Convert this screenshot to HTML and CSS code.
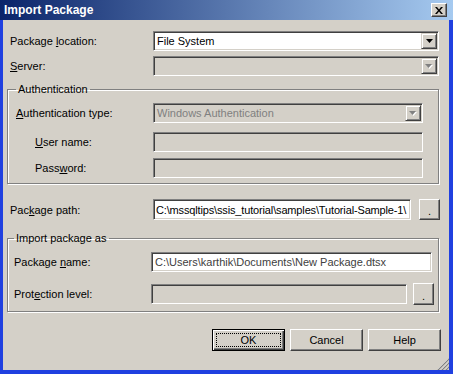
FILE: index.html
```html
<!DOCTYPE html>
<html lang="en">
<head>
    <meta charset="UTF-8">
    <title>Import Package</title>
    <link rel="stylesheet" href="styles.css">
</head>
<body>
    <div class="window">
        <div class="titlebar">
            <span class="title">Import Package</span>
            <button class="close" type="button">
                <svg width="8" height="7" viewBox="0 0 8 7"><path d="M0 0h2l2 2.5L6 0h2L5 3.5 8 7H6L4 4.5 2 7H0l3-3.5z" fill="#000"/></svg>
            </button>
        </div>

        <div class="frame">
            <!-- location / server -->
            <div class="row top">
                <label class="lbl lbl-top">Package <u>l</u>ocation:</label>
                <div class="field combo w-top">
                    <span class="text">File System</span>
                    <span class="drop"><svg width="7" height="4" viewBox="0 0 7 4"><path d="M0 0h7L3.5 4z" fill="#000"/></svg></span>
                </div>
            </div>
            <div class="row top gap5">
                <label class="lbl lbl-top"><u>S</u>erver:</label>
                <div class="field combo off w-top">
                    <span class="text"></span>
                    <span class="drop"><svg width="8" height="5" viewBox="0 0 8 5"><path d="M1 1h7L4.5 5z" fill="#fff"/><path d="M0 0h7L3.5 4z" fill="#808080"/></svg></span>
                </div>
            </div>

            <fieldset class="group auth">
                <legend>Authentication</legend>
                <div class="row first">
                    <label class="lbl lbl-grp"><u>A</u>uthentication type:</label>
                    <div class="field combo off w-auth">
                        <span class="text">Windows Authentication</span>
                        <span class="drop"><svg width="8" height="5" viewBox="0 0 8 5"><path d="M1 1h7L4.5 5z" fill="#fff"/><path d="M0 0h7L3.5 4z" fill="#808080"/></svg></span>
                    </div>
                </div>
                <div class="row gap9">
                    <label class="lbl lbl-sub"><u>U</u>ser name:</label>
                    <div class="field off w-auth"></div>
                </div>
                <div class="row gap6">
                    <label class="lbl lbl-sub">Pass<u>w</u>ord:</label>
                    <div class="field off w-auth"></div>
                </div>
            </fieldset>

            <div class="row top path">
                <label class="lbl lbl-top">Pac<u>k</u>age path:</label>
                <div class="field w-path path-text">C:\mssqltips\ssis_tutorial\samples\Tutorial-Sample-1\</div>
                <button class="btn dots" type="button">.</button>
            </div>

            <fieldset class="group import">
                <legend>Import package as</legend>
                <div class="row first">
                    <label class="lbl lbl-grp">Package <u>n</u>ame:</label>
                    <div class="field w-name pkg-name">C:\Users\karthik\Documents\New Package.dtsx</div>
                </div>
                <div class="row tall gap11">
                    <label class="lbl lbl-grp">Prot<u>e</u>ction level:</label>
                    <div class="field off w-prot"></div>
                    <button class="btn dots tall-btn" type="button">.</button>
                </div>
            </fieldset>

            <div class="actions">
                <button class="btn action default" type="button"><span>OK</span></button>
                <button class="btn action" type="button">Cancel</button>
                <button class="btn action" type="button">Help</button>
            </div>

            <svg class="grip" width="12" height="12" viewBox="0 0 12 12">
                <path d="M11 1L1 11M11 5L5 11M11 9L9 11" stroke="#fff" stroke-width="1"/>
                <path d="M12 1L1 12M12 5L5 12M12 9L9 12" stroke="#808080" stroke-width="1.2"/>
            </svg>
        </div>
    </div>
</body>
</html>
```

FILE: styles.css
```css
body {
    margin: 0;
    font-family: "Liberation Sans", Arial, sans-serif;
    font-size: 11px;
    color: #000;
    background: #d4d0c8;
}

.window {
    width: 453px;
    height: 374px;
    display: flex;
    flex-direction: column;
}

.titlebar {
    height: 20px;
    flex: none;
    display: flex;
    align-items: center;
    justify-content: space-between;
    padding: 0 6px 0 4px;
    background: linear-gradient(to right, #0a246a, #a6caf0);
    color: #fff;
    font-weight: bold;
    font-size: 12px;
}

.close {
    width: 16px;
    height: 14px;
    padding: 0;
    box-sizing: border-box;
    background: #d4d0c8;
    border: 1px solid;
    border-color: #fff #404040 #404040 #fff;
    box-shadow: inset -1px -1px #808080;
    display: flex;
    align-items: center;
    justify-content: center;
}

.frame {
    flex: 1;
    position: relative;
    background: #d4d0c8;
    border: solid #2040e0;
    border-width: 0 4px 4px 3px;
    padding: 11px 0 0 4px;
}

/* rows */
.row {
    display: flex;
    align-items: center;
    height: 20px;
}

.row.top {
    padding-left: 3px;
}

.gap5 { margin-top: 5px; }
.gap6 { margin-top: 6px; }
.gap9 { margin-top: 9px; }
.gap11 { margin-top: 11px; }

.row.first {
    margin-top: 7px;
}

.row.path {
    margin-top: 15px;
    height: 21px;
}

.row.tall {
    height: 22px;
}

.lbl {
    flex: none;
    white-space: nowrap;
}

.lbl-top { width: 143px; }
.lbl-grp { width: 137px; }
.lbl-sub { width: 118px; margin-left: 19px; }

/* sunken fields */
.field {
    flex: none;
    box-sizing: border-box;
    height: 20px;
    border: 1px solid;
    border-color: #808080 #fff #fff #808080;
    box-shadow: inset 1px 1px #404040, inset -1px -1px #d4d0c8;
    background: #fff;
    display: flex;
    align-items: center;
    padding: 0 2px 0 3px;
    overflow: hidden;
    white-space: nowrap;
}

.field.off {
    background: #d4d0c8;
    color: #808080;
}

.combo {
    padding-right: 1px;
}

.combo .text {
    flex: 1;
}

.drop {
    width: 16px;
    height: 16px;
    box-sizing: border-box;
    background: #d4d0c8;
    border: 1px solid;
    border-color: #d4d0c8 #404040 #404040 #d4d0c8;
    box-shadow: inset 1px 1px #fff, inset -1px -1px #808080;
    display: flex;
    align-items: center;
    justify-content: center;
}

.w-top { width: 286px; }
.w-auth { width: 270px; }
.w-path { width: 258px; height: 21px; }
.w-name { width: 281px; }
.w-prot { width: 256px; }

.path-text {
    padding-left: 2px;
    letter-spacing: -0.15px;
}

.pkg-name {
    color: #404040;
}

/* group boxes */
.group {
    margin: 7px 10px 0 0;
    padding: 0 0 5px 8px;
    min-width: 0;
    border: 1px solid #808080;
    box-shadow: inset 1px 1px #fff, 1px 1px #fff;
}

.group legend {
    padding: 0 2px;
    line-height: 13px;
}

.group.import {
    margin-top: 12px;
    padding: 0 0 6px 6px;
}

/* raised buttons */
.btn {
    box-sizing: border-box;
    padding: 0;
    background: #d4d0c8;
    border: 1px solid;
    border-color: #fff #404040 #404040 #fff;
    box-shadow: inset -1px -1px #808080, inset 1px 1px #d4d0c8;
    font: inherit;
    color: #000;
}

.dots {
    width: 21px;
    height: 21px;
    margin-left: 8px;
    line-height: 1;
    padding-top: 4px;
}

.tall-btn {
    height: 22px;
    margin-left: 6px;
}

.actions {
    display: flex;
    justify-content: flex-end;
    gap: 5px;
    margin-top: 17px;
    padding-right: 8px;
}

.action {
    width: 73px;
    height: 22px;
}

.action.default {
    border: 1px solid #000;
    box-shadow: inset 1px 1px #fff, inset -1px -1px #404040, inset -2px -2px #808080;
    outline: 1px dotted #000;
    outline-offset: -5px;
}

.grip {
    position: absolute;
    right: 0;
    bottom: 0;
}
```
